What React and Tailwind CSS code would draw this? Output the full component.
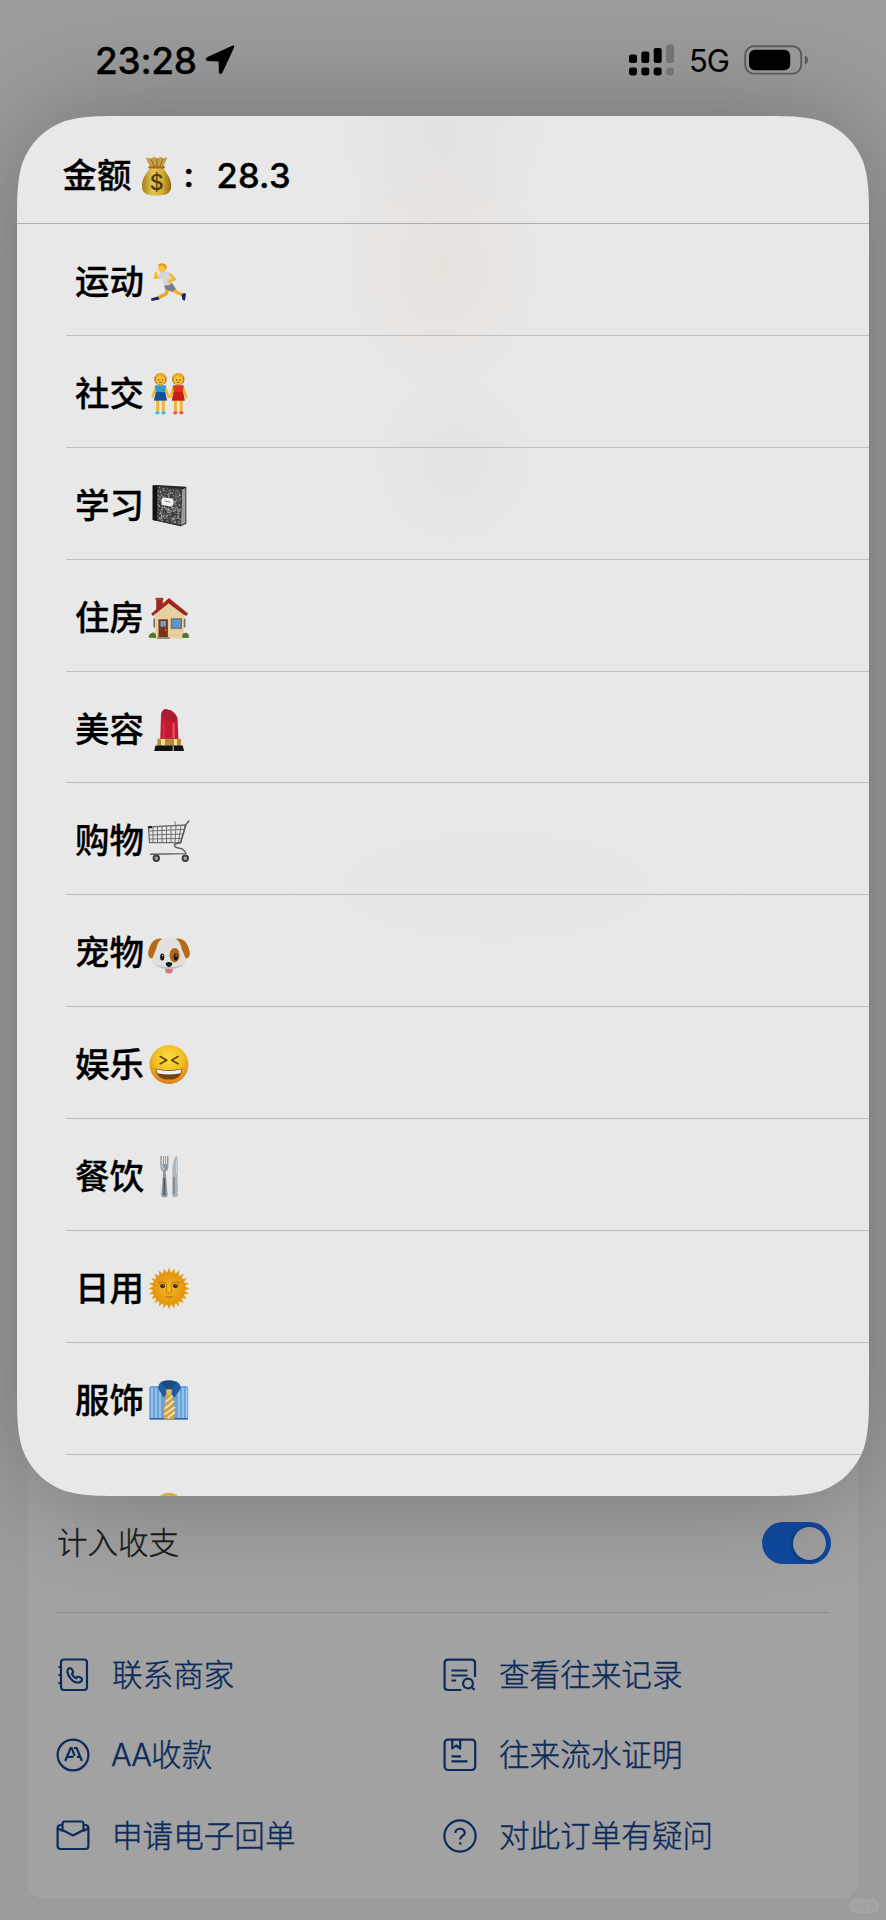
/* ── Category emoji ── */

function Runner() {
  return (
    <>
      <path d="M22 27 L30 32 L36 34" stroke="#f0b32c" strokeWidth="3.4" fill="none" strokeLinejoin="round" />
      <path d="M20 27 L18 33 L10 37" stroke="#e8a820" strokeWidth="3.4" fill="none" strokeLinejoin="round" />
      <path d="M33.5 33.5 L36.5 32 L38 33 L37 39.5 L34.5 39 Z" fill="#1a2568" />
      <path d="M3 37.5 L10 35.5 L11.5 38.5 L3.5 40 Z" fill="#1a2568" />
      <path d="M16 23 L24 22 L28 28 L24 31 L17 28 Z" fill="#7b7e82" />
      <path d="M12 16 L7.5 16.5 L8 12.5" stroke="#f3b62f" strokeWidth="2.8" fill="none" strokeLinecap="round" />
      <path d="M12 11 L21 10.5 L24 14 L22 24 L16 24.5 L13.5 17 L10 16 Z" fill="#d3d6dc" />
      <path d="M22.5 13.5 L26.5 18 L20.5 21" stroke="#f3b62f" strokeWidth="2.6" fill="none" strokeLinecap="round" />
      <circle cx="14.2" cy="7" r="4.2" fill="#f7c23c" />
      <path d="M9.8 5 Q11 1.5 15 2.3 Q19.5 3.2 18.6 7.5 L17 8 L15.5 5 Z" fill="#dda326" />
    </>
  )
}

function Girl({ x, dress, light, shoe }) {
  return (
    <g transform={`translate(${x} 0)`}>
      <path d="M-4.5 14 L-8 24 M4.5 14 L8 24" stroke="#f1b42d" strokeWidth="2.3" strokeLinecap="round" />
      <path d="M-2.8 26 V38 M2.8 26 V38" stroke="#f1b42d" strokeWidth="3" />
      <ellipse cx="-3" cy="39.8" rx="2.2" ry="1.7" fill={shoe} />
      <ellipse cx="3" cy="39.8" rx="2.2" ry="1.7" fill={shoe} />
      <path d="M-5.4 12.3 H5.4 L4.6 18.5 L6.4 27.5 H-6.4 L-4.6 18.5 Z" fill={light} />
      <path d="M-4.6 19 H4.6 L6.4 27.5 H-6.4 Z" fill={dress} />
      <circle cy="6.2" r="6.2" fill="#bd7c14" />
      <circle cy="7" r="4.7" fill="#f8c636" />
      <path d="M-5.5 4.5 Q-4 0 0 0 Q4 0 5.5 4.5 Q1 5 -1 2.6 Q-2.5 4.6 -5.5 4.5Z" fill="#edaa28" />
      <circle cx="-1.8" cy="7" r=".7" fill="#5b3208" />
      <circle cx="1.8" cy="7" r=".7" fill="#5b3208" />
      <path d="M-1.4 9.4 H1.4" stroke="#8e4312" strokeWidth=".9" />
    </g>
  )
}

function Friends() {
  return (
    <>
      <Girl x={12.5} dress="#15509f" light="#2e9bcb" shoe="#50b6cf" />
      <Girl x={30.3} dress="#c41f17" light="#e03324" shoe="#e4564d" />
    </>
  )
}

// speckles on the composition book cover
const noise = (n) => {
  const v = Math.sin(n) * 43758.5453
  return v - Math.floor(v)
}
const specks = Array.from({ length: 320 }, (_, i) => {
  const x = 9.4 + noise(i + 1) * 23
  const skew = (x - 9) * 0.16
  return [x, 1.6 + skew + noise(i * 3.7 + 9) * 33]
})

function Notebook() {
  return (
    <>
      <path d="M4.7 .5 L9 0 L38.3 1.8 V38.8 L32.5 41.3 L4.7 35 Z" fill="#232323" />
      <path d="M34 4.5 L37.5 3 V38 L33 40 Z" fill="#9b9b9b" />
      <path d="M8.7 .8 L34 4 L32.5 41 L8.7 35.7 Z" fill="#3d3d3d" />
      {specks.map(([x, y], i) => (
        <rect key={i} x={x} y={y} width="1" height=".9" fill={i % 3 ? '#8f8f8f' : '#cacaca'} />
      ))}
      <path d="M4.7 .5 L8.9 1 V35.8 L4.7 35 Z" fill="#111" />
      <path d="M15 12.6 L24.2 13.6 L25.6 15.6 L25 20.6 L23 21.6 L14.6 20 L13.4 18 L13.8 13.8 Z" fill="#f1f1f1" />
      <path d="M16.5 16 L22.5 17" stroke="#888" strokeWidth="1.2" />
    </>
  )
}

function House() {
  return (
    <>
      <path d="M8.2 1.8 H14.8 V10 L8.2 15 Z" fill="#982a1f" />
      <path d="M7.6 .8 H15.3 V3 H7.6 Z" fill="#ae372a" />
      <path d="M21 4 L35.8 17 V41.6 H7 V17 Z" fill="#e6cfa1" />
      <path d="M8 23H35M8 28H35M8 33H35M8 38H35" stroke="#d8be8d" strokeWidth=".5" />
      <path d="M21 1 L40 16.5 L38.4 19 L21 6 L4.8 19 L3.2 16.8 Z" fill="#a3261f" />
      <path d="M21 6 L37 18" stroke="#6a1712" strokeWidth="1" />
      <rect x="10.5" y="22.3" width="9.4" height="18" fill="#7b341a" />
      <rect x="12.4" y="24" width="5.6" height="5.6" fill="#6a9dcc" />
      <circle cx="17.8" cy="33" r=".8" fill="#e0af49" />
      <rect x="22.8" y="21.3" width="11.2" height="10.6" fill="#7b6d5f" />
      <rect x="24.2" y="22.7" width="8.4" height="7.8" fill="#5998d3" />
      <path d="M35.8 21.5 h1.6 v9 h-1.6z M5.4 21.5 h1.6 v9 h-1.6z" fill="#7b6d5f" />
      <rect x="9" y="40" width="12.5" height="2" fill="#958b82" />
      <path d="M1 40.8 Q0 37.5 3 36.5 Q6 34 8 38 L8 41 Z" fill="#4d7a28" />
      <path d="M34.5 41 Q33.5 37 36 36 Q40 34.5 41 39 L40.6 41 Z" fill="#4d7a28" />
    </>
  )
}

function Lipstick() {
  return (
    <>
      <path d="M12.3 30 L13 6 Q13.5 .2 18 .2 Q26.5 1.5 29.5 9 L30.4 30 Z" fill="#c31a31" />
      <path d="M13.4 5 Q15 .2 18 .3 Q26.5 1.5 29 9 Q29 12.5 25 12.5 Q17 11 13.4 5Z" fill="#a91b30" />
      <path d="M24.5 14 H26.8 V29 H24.5Z" fill="#e4505f" />
      <path d="M15 14 H16.6 V29 H15Z" fill="#d3304a" />
      <path d="M9.4 29.8 H33 V36.8 H9.4 Z" fill="#b38d3a" />
      <path d="M13 30 H17 V36.8 H13Z M26 30 H29 V36.8 H26Z" fill="#efdc95" />
      <path d="M7.5 36.6 H34.8 L36 42 H6.2 Z" fill="#121212" />
      <path d="M24.5 37 H26 V42 H24.5Z" fill="#9a9a9a" />
    </>
  )
}

function Cart() {
  return (
    <g fill="none" stroke="#6f6f6f" strokeWidth="1">
      <path d="M26.5 1 L28 6" strokeWidth=".8" />
      <path d="M.5 7 L37.5 5 L32.5 22.6 H1.5 Z" strokeWidth="1.3" />
      <path d="M1 11 L36 9.4 M1.3 15 L35 14 M1.5 19 L34 18.4" />
      <path d="M5 7V22.5M9.5 6.7V22.5M14 6.5V22.5M18.5 6.3V22.5M23 6V22.5M28 6 L27 22.5M33 5.5 L30.5 22.5" />
      <path d="M41.2 .5 L38 4.5 L32.6 23 L27 24 Q25.5 26 28.5 27.5 L34 28.8 Q37.5 31 38 34 M38 33.6 L2 34.2 M8 34 V38" stroke="#5c5c5c" strokeWidth="1.4" />
      <path d="M.3 7.2 H4" stroke="#222" strokeWidth="2.2" />
      <circle cx="8.3" cy="38.3" r="2.7" stroke="#3e3e3e" strokeWidth="2" fill="#aaa" />
      <circle cx="37.3" cy="38.3" r="2.7" stroke="#3e3e3e" strokeWidth="2" fill="#aaa" />
    </g>
  )
}

function Dog() {
  return (
    <>
      <ellipse cx="21" cy="38" rx="3.9" ry="3.6" fill="#dc7484" />
      <path d="M13 6.4 C6 6 1 12 .2 21 C0 26 4 28 6 25 C8 21 11 14 15 8Z" fill="#b56a17" />
      <path d="M29 6.4 C36 6 41 12 41.8 21 C42 26 38 28 36 25 C34 21 31 14 27 8Z" fill="#b56a17" />
      <path d="M21 5.6 C28 5.6 31.5 8.5 33 14 C34.2 20 38 24 37.8 29.5 C37.4 34.5 32 37 21 37 C10 37 4.6 34.5 4.3 29.5 C4 24 7.8 20 9 14 C10.5 8.5 14 5.6 21 5.6Z" fill="#e1e0df" />
      <path d="M7 32 Q14 36.5 21 34.5 Q28 36.5 35 32 Q31 37 21 37 Q11 37 7 32Z" fill="#bebdbb" />
      <ellipse cx="26.6" cy="23.2" rx="5" ry="7.2" fill="#ae661b" />
      <ellipse cx="14.2" cy="25" rx="2.1" ry="3.6" fill="#21180f" />
      <ellipse cx="27.8" cy="25" rx="2.1" ry="3.6" fill="#21180f" />
      <circle cx="14.5" cy="23.6" r=".7" fill="#fff" />
      <circle cx="28.1" cy="23.6" r=".7" fill="#fff" />
      <path d="M17.8 32 L17.8 30.9 Q21 29.2 24.2 30.9 Q24.4 34 21 35.2 Q17.6 34 17.8 32Z" fill="#161616" />
    </>
  )
}

function Laugh() {
  return (
    <>
      <circle cx="21" cy="20.5" r="19.4" fill="url(#face)" />
      <path d="M12.3 12.6 L18.7 16.3 L12.3 19.8 M30 12.6 L23.6 16.3 L30 19.8" stroke="#6b3d0b" strokeWidth="1.7" fill="none" strokeLinecap="round" strokeLinejoin="round" />
      <path d="M7.5 24.5 Q21 28 34.5 24.5 Q33.5 35.6 21 35.6 Q8.5 35.6 7.5 24.5Z" fill="#76420f" />
      <path d="M8.4 25.3 Q21 28.6 33.6 25.3 Q33 29.6 31.5 29.6 Q21 31.6 10.5 29.6 Q9 29.4 8.4 25.3Z" fill="#efefef" />
    </>
  )
}

function Cutlery() {
  return (
    <>
      <path d="M12.4 0 H13.8 V8 H15 V0 H16 V8 H17 V0 H18 V8 H19 V0 H20.4 V10 Q20.2 14.5 17.6 15.5 L19.6 39 Q19.4 41.3 16.4 41.3 Q13.4 41.3 13.2 39 L15.2 15.5 Q12.6 14.5 12.4 10Z" fill="#8d979e" />
      <path d="M16.4 22 V39" stroke="#4f5357" strokeWidth="1.6" />
      <path d="M13.8 8.5 Q14 13 16.4 13.5" stroke="#b8d2e8" strokeWidth="1.4" fill="none" />
      <path d="M24.3 20 Q23.8 8 27.2 1 Q28.6 -1.4 29.4 1.5 Q30.2 10 29.6 20 L30 39 Q29.8 41.3 27 41.3 Q24.2 41.3 24 39Z" fill="#a9b5c0" />
      <path d="M26 21 V38" stroke="#7d8287" strokeWidth="1.5" />
      <path d="M28.4 5 V18" stroke="#c7d6e2" strokeWidth="1" />
    </>
  )
}

const rays = Array.from({ length: 24 }, (_, i) => i * 15)

function Sun() {
  return (
    <>
      {rays.map((a) => (
        <path key={a} d="M18.9 5 L21 -.2 L23.1 5Z" fill="#e59d16" transform={`rotate(${a} 21 20.5)`} />
      ))}
      <circle cx="21" cy="20.5" r="16.3" fill="url(#sun)" />
      <path d="M10.5 15.3 Q14.5 12.6 18.2 15.5 M31.5 15.3 Q27.5 12.6 23.8 15.5" stroke="#b06d0c" strokeWidth="1.2" fill="none" />
      <ellipse cx="14.6" cy="18" rx="2.5" ry="1.9" fill="#35210a" />
      <ellipse cx="27.4" cy="18" rx="2.5" ry="1.9" fill="#35210a" />
      <circle cx="15.2" cy="17.4" r=".5" fill="#fff" />
      <circle cx="28" cy="17.4" r=".5" fill="#fff" />
      <path d="M18.8 16 L18.4 24.5 Q21 26.8 23.6 24.5 L23.2 16" stroke="#c98310" strokeWidth="1" fill="none" />
      <path d="M16.5 28.2 Q21 27.6 25.5 28.2 Q21 32.4 16.5 28.2Z" fill="#c87a16" />
    </>
  )
}

function Shirt() {
  return (
    <>
      <rect x="1.2" y="6" width="39" height="33.6" rx="2.6" fill="#6ba2dc" />
      <path d="M4 8V39M8 8V39M12 12V39M31 12V39M35 8V39M38.6 8V39" stroke="#a2c8ee" strokeWidth="1.5" />
      <path d="M1.5 38.7 H40" stroke="#2f629f" strokeWidth="1.4" />
      <path d="M14 1.5 Q21 -1 28 1.5 L31 9 H11Z" fill="#1a4b84" />
      <path d="M18 14 H24 L27 33 L26 39.5 H16.5 L15.5 33 Z" fill="#d0a045" />
      <path d="M17.5 22 L24.5 16 M16.5 29 L26 21 M16.5 34.5 L27 27 M19.5 38 L27 32" stroke="#efe1b8" strokeWidth="1.7" />
      <path d="M14 1.2 Q10.5 3.5 10.2 8 L15.5 17.8 L21 10.5 L26.5 17.8 L32.8 8 Q32.5 3.5 28 1.2 Q28 6 21 10 Q14 6 14 1.2Z" fill="#205c9b" />
      <path d="M18 9.5 H24 L23.4 14.5 H18.6Z" fill="#e2ba61" />
    </>
  )
}

function Head() {
  return <circle cx="21" cy="14.8" r="14" fill="#d8ad3f" />
}

const categories = [
  { label: '运动', icon: Runner },
  { label: '社交', icon: Friends },
  { label: '学习', icon: Notebook },
  { label: '住房', icon: House },
  { label: '美容', icon: Lipstick },
  { label: '购物', icon: Cart },
  { label: '宠物', icon: Dog },
  { label: '娱乐', icon: Laugh },
  { label: '餐饮', icon: Cutlery },
  { label: '日用', icon: Sun },
  { label: '服饰', icon: Shirt },
  { label: '', icon: Head },
]

/* ── Order action icons, 34×34 ── */

function ContactIcon() {
  return (
    <>
      <rect x="5" y="1.5" width="26" height="30.5" rx="3" />
      <path d="M2.5 9 H5 M2.5 17 H5 M2.5 25 H5" />
      <path d="M13.2 10.2 C11 11 10.8 14 12.6 17.4 C14.8 21.4 18.6 24.6 22 24.6 C24.8 24.6 26.2 22.8 26 21 C25.6 19.6 22.4 18.2 21.2 19 L20.2 20.2 C18.6 19.8 16.4 17.4 16 15.8 L17 14.6 C17.6 13.2 15.4 9.6 13.2 10.2Z" />
    </>
  )
}

function SplitIcon() {
  return (
    <>
      <circle cx="17" cy="17" r="15.4" />
      <path d="M9.2 23 L14.6 10 H15.8 L18.6 18 M11.5 18.8 H17.4 M18 10 H20.6 L26 23 M21 18.8 H24" />
    </>
  )
}

function MailIcon() {
  return (
    <>
      <path d="M6.5 6 H5 Q1.6 6 1.6 9 V27 Q1.6 30 4.6 30 H29.4 Q32.4 30 32.4 27 V9 Q32.4 6 29 6 H27.5" />
      <path d="M1.8 9.5 L6.5 11.8 V5 Q6.5 2.5 9 2.5 H25 Q27.5 2.5 27.5 5 V11.8 L32.2 9.5 M6.5 11 L17 16.5 L27.5 11" />
    </>
  )
}

function RecordIcon() {
  return (
    <>
      <path d="M32 19 V5 Q32 1.6 28.6 1.6 H5 Q1.6 1.6 1.6 5 V28.8 Q1.6 32 5 32 H18.5" />
      <path d="M8.5 12.5 H24.5 M8.5 17.5 H24.5 M8.5 22.5 H13" />
      <circle cx="25" cy="25.6" r="4.9" />
      <path d="M28.6 29 L31.6 32" />
    </>
  )
}

function ProofIcon() {
  return (
    <>
      <rect x="1.6" y="1.6" width="30.6" height="30.4" rx="3.4" />
      <path d="M9.3 2 V10.5 L13.2 7.5 L17.2 10.5 V2 M8.5 18.4 H18 M8.5 23.4 H24.5" />
    </>
  )
}

function QuestionIcon() {
  return (
    <>
      <circle cx="17" cy="17" r="15.6" />
      <path d="M12.4 14 C12.4 8.4 21.8 8.4 21.8 13.8 C21.8 17 17.2 16.8 17.2 20.4" />
      <path d="M17.2 23.2 V25.6" />
    </>
  )
}

const actions = [
  { label: '联系商家', icon: ContactIcon },
  { label: '查看往来记录', icon: RecordIcon },
  { label: 'AA收款', icon: SplitIcon },
  { label: '往来流水证明', icon: ProofIcon },
  { label: '申请电子回单', icon: MailIcon },
  { label: '对此订单有疑问', icon: QuestionIcon },
]

function StatusBar() {
  return (
    <div className="relative z-20 flex h-[116px] items-start justify-between pl-[95px] pr-[77px] pt-[38px] text-black">
      <div className="flex h-[44px] items-center gap-[8px]">
        <span className="w-[102px] pt-px text-[37px] font-medium leading-[44px] tracking-[-0.3px] [-webkit-text-stroke:0.3px]">23:28</span>
        <svg width="30" height="30" viewBox="0 0 30 30">
          <path d="M27.2 .8 Q30 0 29 2.8 L17.5 27.6 Q16 30.2 13.9 28 L13.6 16.4 L2 16 Q-.6 14 2 12.2 Z" />
        </svg>
      </div>
      <div className="flex h-[44px] items-center">
        <svg width="46" height="32" viewBox="0 0 46 32">
          <rect x="0" y="10.4" width="8" height="8.6" rx="2.2" />
          <rect x="12.3" y="7.4" width="8" height="11.6" rx="2.2" />
          <rect x="24.7" y="4" width="8" height="15" rx="2.2" />
          <rect x="37.1" y="0.4" width="8" height="18.6" rx="2.2" fill="#747474" />
          <rect x="0" y="23.4" width="8" height="8" rx="2.4" />
          <rect x="12.3" y="23.4" width="8" height="8" rx="2.4" />
          <rect x="24.7" y="23.4" width="8" height="8" rx="2.4" />
          <rect x="37.1" y="23.4" width="8" height="8" rx="3.4" fill="#747474" />
        </svg>
        <span className="ml-[14px] w-[40px] pt-[2px] text-[31px] leading-[44px] tracking-[-1px]">5G</span>
        <svg className="ml-[15px]" width="65" height="30" viewBox="0 0 65 30">
          <rect x="1.2" y="1.2" width="56" height="27.4" rx="8.6" fill="none" stroke="#5a5a5a" strokeWidth="1.9" />
          <rect x="5" y="4.8" width="41.2" height="20.4" rx="5.8" />
          <path d="M60.8 10.4 Q64 11.5 64 15 Q64 18.5 60.8 19.6Z" fill="#5a5a5a" />
        </svg>
      </div>
    </div>
  )
}

function CategorySheet() {
  return (
    <div className="absolute left-[17px] top-[116px] z-10 h-[1380px] w-[852px] rounded-[84px] shadow-[0_0_110px_rgba(0,0,0,0.28)]">
      <div className="flex h-full flex-col overflow-hidden bg-[#e8e8e8] bg-[radial-gradient(ellipse_110px_140px_at_425px_150px,rgba(231,221,212,0.6),transparent),radial-gradient(ellipse_120px_110px_at_425px_10px,rgba(222,222,222,0.6),transparent),radial-gradient(ellipse_85px_90px_at_437px_345px,rgba(224,225,225,0.6),rgba(226,227,227,0.4)_75%,transparent),radial-gradient(ellipse_260px_90px_at_480px_770px,rgba(230,226,222,0.4),transparent)] text-black [clip-path:path('M113.1_0H738.9C771.5_0_787.7_0_805.3_5.5C824.4_12.5_839.5_27.6_846.5_46.7C852_64.3_852_80.5_852_113.1V1266.9C852_1299.5_852_1315.7_846.5_1333.3C839.5_1352.4_824.4_1367.5_805.3_1374.5C787.7_1380_771.5_1380_738.9_1380H113.1C80.5_1380_64.3_1380_46.7_1374.5C27.6_1367.5_12.5_1352.4_5.5_1333.3C0_1315.7_0_1299.5_0_1266.9V113.1C0_80.5_0_64.3_5.5_46.7C12.5_27.6_27.6_12.5_46.7_5.5C64.3_0_80.5_0_113.1_0Z')]">
        <div className="flex h-[108px] flex-shrink-0 items-center border-b border-[#b0b0b0] pl-[45.5px] pt-[13px] text-[34.5px] font-medium leading-[44px]">
          <span className="[-webkit-text-stroke:0.3px]">金额</span>
          <svg className="ml-[9px]" width="32" height="40" viewBox="0 0 32 40">
            <path d="M9 11 L4.6 1.4 L10 2.4 L13 .8 L16.5 2.2 L20 .8 L22 2.2 L26.4 1.2 L22.4 11Z" fill="#c69f4b" />
            <path d="M10 3 L13 10 M16 3 V10 M22 3 L19 10" stroke="#8d6721" strokeWidth="1" />
            <path d="M9 12 C5 18 1 22 1 30 C1 37 5 39.6 15.6 39.6 C26 39.6 30.2 37 30.2 30 C30.2 22 26 18 22 12 Z" fill="url(#bag)" />
            <path d="M8.4 11.4 H23" stroke="#a06a24" strokeWidth="2.2" strokeLinecap="round" />
            <text x="15.6" y="34" textAnchor="middle" fontSize="21.5" fontWeight="500" fill="#4a3a10">$</text>
          </svg>
          <span className="ml-[11px] w-[33px] flex-shrink-0 pb-[2px] leading-[40px] [-webkit-text-stroke:0.6px]">:</span>
          <span className="tracking-[0.2px] [-webkit-text-stroke:0.4px]">28.3</span>
        </div>

        {categories.map(({ label, icon: Icon }, i) => (
          <div
            key={i}
            className="ml-[49px] flex h-[111.9px] flex-shrink-0 items-center border-b border-[#bdbfbe] pl-[9px] pt-[5px]"
          >
            <span className="w-[73px] text-[34.5px] font-medium leading-[44px] [-webkit-text-stroke:0.3px]">{label}</span>
            <svg width="42" height="42" viewBox="0 0 42 42" overflow="visible">
              <Icon />
            </svg>
          </div>
        ))}
      </div>
    </div>
  )
}

function OrderCard() {
  return (
    <div className="mx-[28px] mb-[21px] mt-auto flex h-[460px] flex-col rounded-b-[16px] bg-[#a2a2a2] px-[28px] pt-[78px]">
      <div className="flex h-[52px] items-center justify-between">
        <span className="pl-px text-[30.5px] font-light leading-[44px] text-[#1b1b1b] [-webkit-text-stroke:0.4px]">计入收支</span>
        <div className="mr-[-1px] flex h-[42px] w-[69px] items-center justify-end rounded-full bg-[#0f4aa0] pr-[5px]">
          <div className="h-[33px] w-[33px] rounded-full bg-[#9f9f9f] shadow-[-1px_1px_4px_rgba(0,0,0,0.3)]" />
        </div>
      </div>
      <div className="mt-[43px] h-px flex-shrink-0 bg-[#8e908e]" />
      <div className="mt-[22px] grid grid-cols-[387px_1fr]">
        {actions.map(({ label, icon: Icon }) => (
          <div key={label} className="flex h-[80.3px] items-center gap-[22px] text-[#0c2b5c]">
            <svg width="34" height="34" viewBox="0 0 34 34" fill="none" stroke="currentColor" strokeWidth="2.2" strokeLinejoin="round">
              <Icon />
            </svg>
            <span className="text-[30.6px] font-light leading-[44px] [-webkit-text-stroke:0.4px]">
              {label.startsWith('AA') ? (
                <>
                  <span className="-ml-px tracking-[-0.8px]">AA</span>
                  {label.slice(2)}
                </>
              ) : (
                label
              )}
            </span>
          </div>
        ))}
      </div>
    </div>
  )
}

export default function App() {
  return (
    <main className="relative flex h-[1920px] w-[886px] flex-col overflow-hidden bg-[#9c9c9c] font-['Inter','Noto_Sans_CJK_SC',sans-serif]">
      <svg className="absolute h-0 w-0">
        <defs>
          <radialGradient id="face" cx=".5" cy=".35" r=".65">
            <stop offset="0" stopColor="#f8df3a" />
            <stop offset=".6" stopColor="#f2bd25" />
            <stop offset="1" stopColor="#dc7d16" />
          </radialGradient>
          <radialGradient id="sun">
            <stop offset="0" stopColor="#f2bb25" />
            <stop offset="1" stopColor="#e3930f" />
          </radialGradient>
          <linearGradient id="bag">
            <stop offset="0" stopColor="#a67b16" />
            <stop offset=".35" stopColor="#e3c553" />
            <stop offset=".7" stopColor="#d2ad34" />
            <stop offset="1" stopColor="#93690f" />
          </linearGradient>
        </defs>
      </svg>
      <StatusBar />
      <CategorySheet />
      <OrderCard />
      <div className="absolute bottom-[7px] right-[7px] flex h-[14px] w-[30px] items-center justify-center rounded-full bg-[#a5a5a5] text-[8px] leading-none text-[#9a9a9a]">
        小红书
      </div>
    </main>
  )
}
